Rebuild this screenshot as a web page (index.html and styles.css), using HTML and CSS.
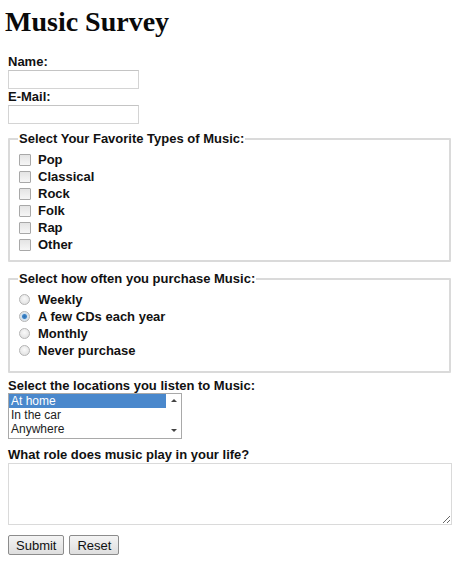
FILE: index.html
```html
<!DOCTYPE html>
<html lang="en">
<head>
<meta charset="utf-8">
<title>Music Survey</title>
<link rel="stylesheet" href="styles.css">
</head>
<body>
<h1 class="title">Music Survey</h1>
<form class="survey">
  <label class="field-label" for="name">Name:</label>
  <input class="text-input" type="text" id="name">
  <label class="field-label" for="email">E-Mail:</label>
  <input class="text-input" type="text" id="email">

  <fieldset class="group group-types">
    <legend class="legend">Select Your Favorite Types of Music:</legend>
    <label class="option"><input class="check" type="checkbox"> Pop</label>
    <label class="option"><input class="check" type="checkbox"> Classical</label>
    <label class="option"><input class="check" type="checkbox"> Rock</label>
    <label class="option"><input class="check" type="checkbox"> Folk</label>
    <label class="option"><input class="check" type="checkbox"> Rap</label>
    <label class="option"><input class="check" type="checkbox"> Other</label>
  </fieldset>

  <fieldset class="group group-often">
    <legend class="legend">Select how often you purchase Music:</legend>
    <label class="option"><input class="radio" type="radio" name="often"> Weekly</label>
    <label class="option"><input class="radio" type="radio" name="often" checked> A few CDs each year</label>
    <label class="option"><input class="radio" type="radio" name="often"> Monthly</label>
    <label class="option"><input class="radio" type="radio" name="often"> Never purchase</label>
  </fieldset>

  <div class="field-label label-locations">Select the locations you listen to Music:</div>
  <div class="listbox" role="listbox">
    <div class="list-items">
      <div class="list-item selected" role="option">At home</div>
      <div class="list-item" role="option">In the car</div>
      <div class="list-item" role="option">Anywhere</div>
    </div>
    <div class="list-scroll">
      <span class="arrow arrow-up"></span>
      <span class="arrow arrow-down"></span>
    </div>
  </div>

  <label class="field-label label-role" for="role">What role does music play in your life?</label>
  <textarea class="textarea" id="role"></textarea>

  <div class="buttons">
    <button class="btn" type="button">Submit</button>
    <button class="btn" type="button">Reset</button>
  </div>
</form>
</body>
</html>
```

FILE: styles.css
```css
html, body {
  background: #ffffff;
}
body {
  margin: 0;
  padding: 0 8px;
  font-family: "Liberation Sans", Arial, sans-serif;
  font-size: 13px;
  color: #111;
}
.title {
  font-family: "Liberation Serif", "Times New Roman", serif;
  font-size: 28px;
  font-weight: bold;
  line-height: 34px;
  margin: 5px 0 0 -3px;
  color: #0a0a0a;
}
.survey {
  display: flex;
  flex-direction: column;
  align-items: flex-start;
  margin-top: 16px;
}
.field-label {
  display: block;
  font-weight: bold;
  font-size: 13px;
  line-height: 14px;
  height: 14px;
}
.text-input {
  box-sizing: border-box;
  width: 131px;
  height: 19px;
  margin: 1px 0 1px 0;
  border: 1px solid #d4d4d4;
  border-top-color: #c4c4c4;
  background: #fff;
  padding: 0;
}
.group {
  box-sizing: border-box;
  align-self: stretch;
  margin: 0 -1px 0 0;
  border: 2px solid #dadada;
  border-radius: 1px;
  padding: 5px 8px 7px 9px;
  display: flex;
  flex-direction: column;
}
.group-types {
  margin-top: 7px;
}
.group-often {
  margin-top: 10px;
  padding-bottom: 12px;
}
.legend {
  font-weight: bold;
  font-size: 13px;
  padding: 0 1px;
  margin-left: -1px;
  line-height: 14px;
}
.option {
  display: flex;
  align-items: center;
  gap: 7px;
  height: 17px;
  font-weight: bold;
  font-size: 13px;
}
.check {
  appearance: none;
  -webkit-appearance: none;
  box-sizing: border-box;
  width: 12px;
  height: 12px;
  margin: 0;
  border: 1px solid #a8a8a8;
  background: linear-gradient(#e4e4e4, #f6f6f6);
  border-radius: 1px;
}
.radio {
  appearance: none;
  -webkit-appearance: none;
  box-sizing: border-box;
  width: 11px;
  height: 11px;
  margin: 0 1px 0 0;
  border: 1px solid #b4b4b4;
  border-radius: 50%;
  background: radial-gradient(circle at 50% 40%, #fafafa, #dcdcdc);
}
.radio:checked {
  background: radial-gradient(circle, #2f6fb0 0, #3c84c8 2px, #cfe0ef 3px, #e8e8e8 5px);
}
.label-locations {
  margin-top: 6px;
}
.listbox {
  box-sizing: border-box;
  display: flex;
  width: 174px;
  height: 46px;
  margin-top: 0;
  border: 1px solid #a9a9a9;
  background: #fff;
}
.list-items {
  flex: 1;
  display: flex;
  flex-direction: column;
}
.list-item {
  height: 14px;
  line-height: 14px;
  font-size: 12px;
  padding-left: 2px;
  color: #222;
}
.list-item.selected {
  background: #4a88cc;
  color: #fff;
}
.list-scroll {
  width: 15px;
  display: flex;
  flex-direction: column;
  justify-content: space-between;
  align-items: center;
  background: #fff;
  padding: 5px 0 6px;
}
.arrow {
  width: 0;
  height: 0;
  border-left: 3px solid transparent;
  border-right: 3px solid transparent;
}
.arrow-up {
  border-bottom: 3px solid #444;
}
.arrow-down {
  border-top: 3px solid #444;
}
.label-role {
  margin-top: 9px;
}
.textarea {
  box-sizing: border-box;
  align-self: stretch;
  width: auto;
  height: 62px;
  margin: 1px -2px 0 0;
  border: 1px solid #dadada;
  resize: both;
  padding: 0;
  font-family: "Liberation Sans", Arial, sans-serif;
}
.buttons {
  display: flex;
  gap: 5px;
  margin-top: 10px;
}
.btn {
  box-sizing: border-box;
  height: 20px;
  padding: 0 7px;
  border: 1px solid #8c8c8c;
  border-radius: 2px;
  background: linear-gradient(#f4f4f4, #dedede);
  font-family: "Liberation Sans", Arial, sans-serif;
  font-size: 13px;
  color: #111;
}
```
